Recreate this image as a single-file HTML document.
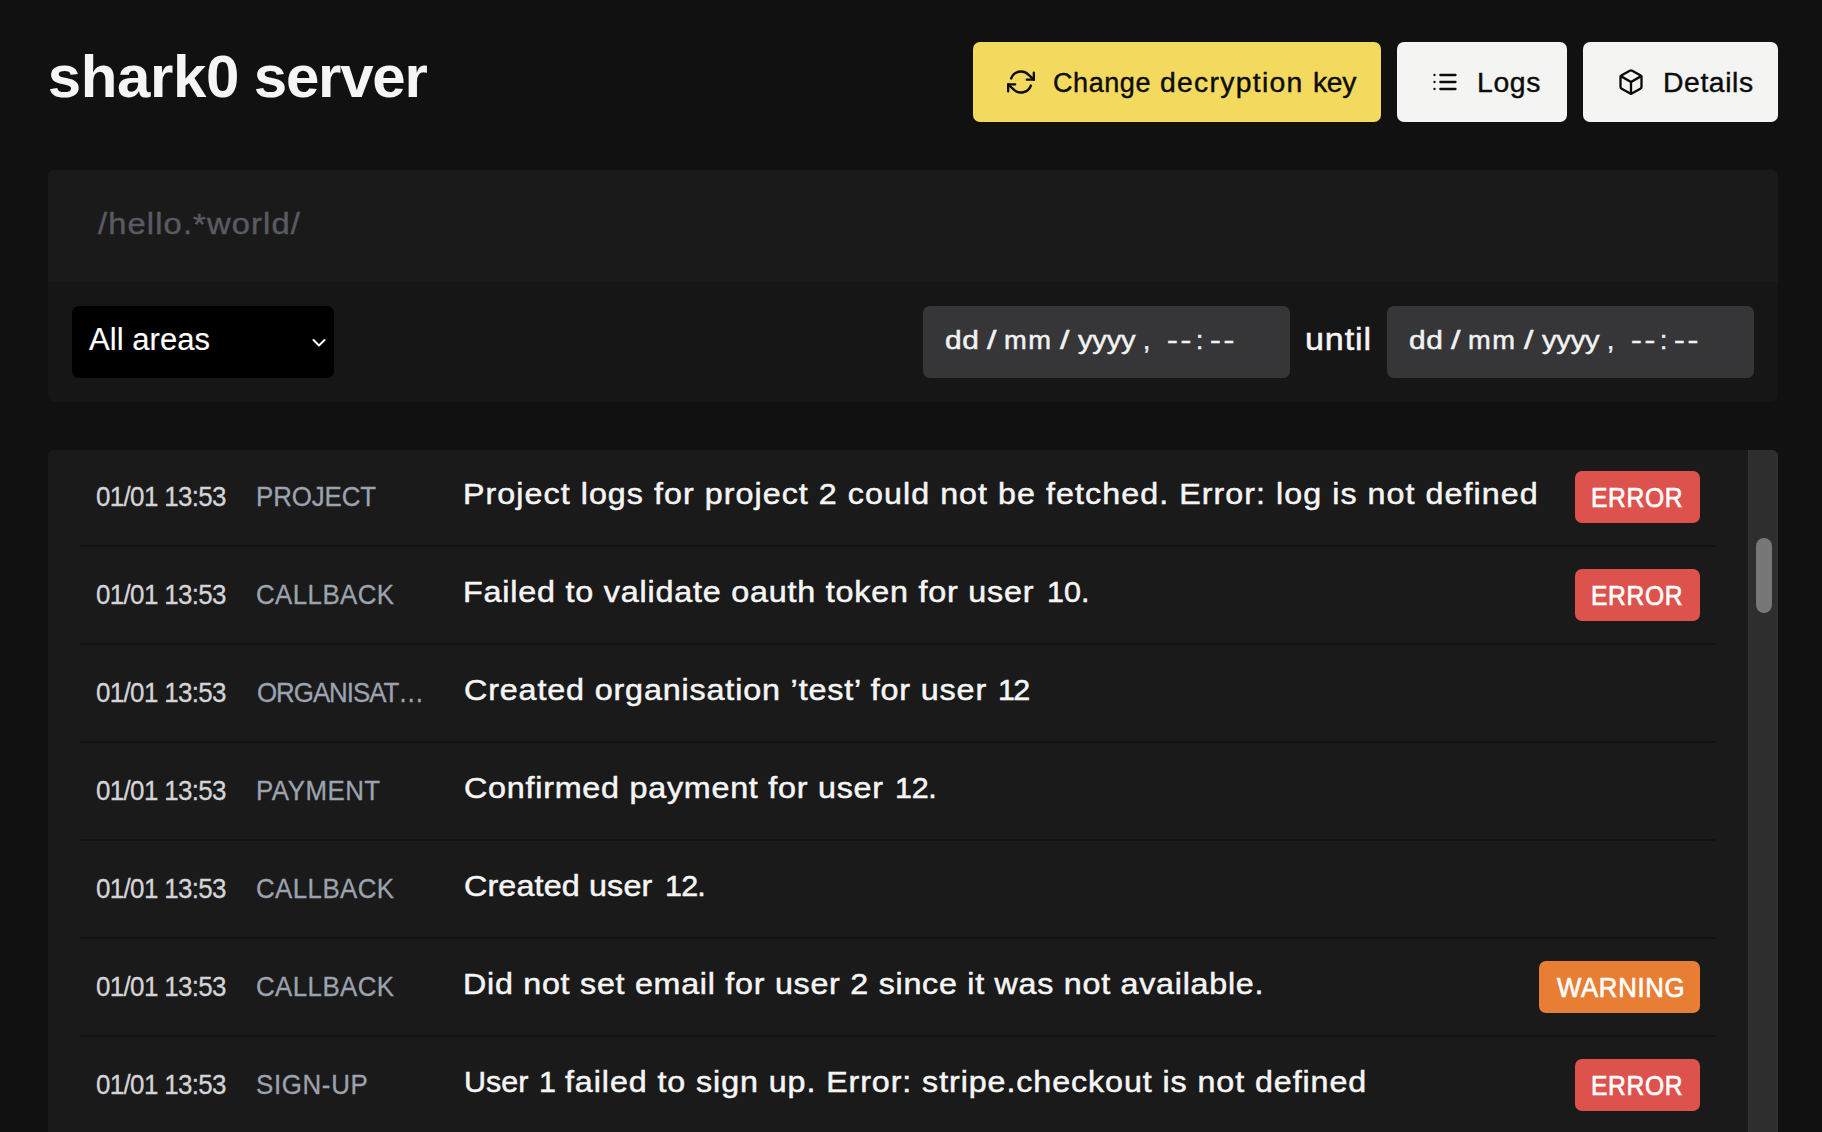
<!DOCTYPE html>
<html lang="en"><head><meta charset="utf-8"><title>shark0 server</title>
<style>
html,body{margin:0;padding:0;}
body{width:1822px;height:1132px;overflow:hidden;background:#111111;font-family:"Liberation Sans",sans-serif;position:relative;}
.t{position:absolute;white-space:nowrap;line-height:1;margin:0;padding:0;font-weight:400;}
.box{position:absolute;box-sizing:border-box;}
svg{position:absolute;overflow:visible;}
</style></head><body>
<div class="box" style="left:973px;top:42px;width:408px;height:80px;background:#f3da5e;border-radius:7px;"></div>
<div class="box" style="left:1397px;top:42px;width:170px;height:80px;background:#f4f4f3;border-radius:7px;"></div>
<div class="box" style="left:1583px;top:42px;width:195px;height:80px;background:#f4f4f3;border-radius:7px;"></div>
<div class="box" style="left:48px;top:170px;width:1730px;height:112px;background:#1a1a1a;border-radius:6px 6px 0 0;"></div>
<div class="box" style="left:48px;top:282px;width:1730px;height:120px;background:#161616;border-radius:0 0 6px 6px;"></div>
<div class="box" style="left:72px;top:306px;width:262px;height:72px;background:#000;border-radius:7px;"></div>
<div class="box" style="left:923px;top:306px;width:367px;height:72px;background:#363638;border-radius:7px;"></div>
<div class="box" style="left:1387px;top:306px;width:367px;height:72px;background:#363638;border-radius:7px;"></div>
<div class="box" style="left:48px;top:450px;width:1730px;height:700px;background:#1a1a1a;border-radius:6px 6px 0 0;overflow:hidden;"><div class="box" style="left:1700px;top:0;width:30px;height:700px;background:#2e2e2e;border-left:1px solid #333;border-right:1px solid #333;"></div><div class="box" style="left:1708px;top:88px;width:16px;height:75px;background:#777777;border-radius:8px;"></div></div>
<div class="box" style="left:80px;top:545px;width:1636px;height:2px;background:#131313;"></div>
<div class="box" style="left:80px;top:643px;width:1636px;height:2px;background:#131313;"></div>
<div class="box" style="left:80px;top:741px;width:1636px;height:2px;background:#131313;"></div>
<div class="box" style="left:80px;top:839px;width:1636px;height:2px;background:#131313;"></div>
<div class="box" style="left:80px;top:937px;width:1636px;height:2px;background:#131313;"></div>
<div class="box" style="left:80px;top:1035px;width:1636px;height:2px;background:#131313;"></div>
<div class="box" style="left:1575px;top:471px;width:125px;height:52px;background:#de524d;border-radius:7px;"></div>
<div class="box" style="left:1575px;top:569px;width:125px;height:52px;background:#de524d;border-radius:7px;"></div>
<div class="box" style="left:1539px;top:961px;width:161px;height:52px;background:#e87d34;border-radius:7px;"></div>
<div class="box" style="left:1575px;top:1059px;width:125px;height:52px;background:#de524d;border-radius:7px;"></div>
<svg style="left:1007.3px;top:67.7px;" width="28" height="28" viewBox="0 0 24 24" fill="none" stroke="#0c0c0c" stroke-width="2" stroke-linecap="round" stroke-linejoin="round"><polyline points="23 4 23 10 17 10"></polyline><polyline points="1 20 1 14 7 14"></polyline><path d="M3.51 9a9 9 0 0 1 14.85-3.36L23 10M1 14l4.64 4.36A9 9 0 0 0 20.49 15"></path></svg>
<svg style="left:1431.4px;top:68.2px;" width="28" height="28" viewBox="0 0 24 24" fill="none" stroke="#0c0c0c" stroke-width="2" stroke-linecap="round" stroke-linejoin="round"><line x1="8" y1="6" x2="21" y2="6"></line><line x1="8" y1="12" x2="21" y2="12"></line><line x1="8" y1="18" x2="21" y2="18"></line><line x1="3" y1="6" x2="3.01" y2="6"></line><line x1="3" y1="12" x2="3.01" y2="12"></line><line x1="3" y1="18" x2="3.01" y2="18"></line></svg>
<svg style="left:1617px;top:68px;" width="28" height="28" viewBox="0 0 24 24" fill="none" stroke="#0c0c0c" stroke-width="2" stroke-linecap="round" stroke-linejoin="round"><path d="M21 16V8a2 2 0 0 0-1-1.73l-7-4a2 2 0 0 0-2 0l-7 4A2 2 0 0 0 3 8v8a2 2 0 0 0 1 1.73l7 4a2 2 0 0 0 2 0l7-4A2 2 0 0 0 21 16z"></path><polyline points="3.27 6.96 12 12.01 20.73 6.96"></polyline><line x1="12" y1="22.08" x2="12" y2="12"></line></svg>
<svg style="left:311px;top:335px;" width="16" height="16" viewBox="0 0 16 16" fill="none" stroke="#ffffff" stroke-width="2" stroke-linecap="round" stroke-linejoin="round"><polyline points="2.5 5 8 10.5 13.5 5"></polyline></svg>
<h1 style="margin:0;padding:0;font-size:inherit;font-weight:inherit;"><span class="t" id="title" style="left:47.80px;top:47.01px;font-size:60px;color:#f5f5f5;letter-spacing:-0.385px;font-weight:700;">shark0</span>
<span class="t" id="title2" style="left:253.80px;top:47.01px;font-size:60px;color:#f5f5f5;letter-spacing:-1.240px;font-weight:700;">server</span>
</h1>
<span class="t" id="b1" style="left:1053.00px;top:70.24px;font-size:27px;color:#0c0c0c;letter-spacing:0.580px;-webkit-text-stroke:0.4px #0c0c0c;">Change</span>
<span class="t" id="b1b" style="left:1160.00px;top:70.24px;font-size:27px;color:#0c0c0c;letter-spacing:1.217px;transform:scaleX(1.05);transform-origin:0 0;-webkit-text-stroke:0.4px #0c0c0c;">decryption</span>
<span class="t" id="b1c" style="left:1313.00px;top:70.24px;font-size:27px;color:#0c0c0c;letter-spacing:-0.381px;transform:scaleX(1.05);transform-origin:0 0;-webkit-text-stroke:0.4px #0c0c0c;">key</span>
<span class="t" id="b2" style="left:1477.40px;top:70.24px;font-size:27px;color:#0c0c0c;letter-spacing:0.635px;transform:scaleX(1.05);transform-origin:0 0;-webkit-text-stroke:0.4px #0c0c0c;">Logs</span>
<span class="t" id="b3" style="left:1662.60px;top:70.24px;font-size:27px;color:#0c0c0c;letter-spacing:0.556px;transform:scaleX(1.05);transform-origin:0 0;-webkit-text-stroke:0.4px #0c0c0c;">Details</span>
<span class="t" id="ph" style="left:98.00px;top:208.96px;font-size:29.7px;color:#5a5a64;letter-spacing:1.036px;transform:scaleX(1.1);transform-origin:0 0;-webkit-text-stroke:0.4px #5a5a64;">/hello.*world/</span>
<span class="t" id="sel" style="left:89.00px;top:323.76px;font-size:31px;color:#ffffff;letter-spacing:0.062px;-webkit-text-stroke:0.15px #ffffff;">All areas</span>
<span class="t" id="until" style="left:1305.20px;top:324.36px;font-size:31px;color:#f5f5f5;letter-spacing:0.775px;transform:scaleX(1.1);transform-origin:0 0;-webkit-text-stroke:0.5px #f5f5f5;">until</span>
<span class="t" id="d1_0" style="left:945.00px;top:326.99px;font-size:26px;color:#f2f2f2;letter-spacing:0.522px;transform:scaleX(1.15);transform-origin:0 0;-webkit-text-stroke:0.5px #f2f2f2;">dd</span>
<span class="t" id="d1_1" style="left:987.00px;top:326.99px;font-size:26px;color:#f2f2f2;letter-spacing:0.000px;transform:scaleX(1.3);transform-origin:0 0;-webkit-text-stroke:0.5px #f2f2f2;">/</span>
<span class="t" id="d1_2" style="left:1004.00px;top:326.99px;font-size:26px;color:#f2f2f2;letter-spacing:1.333px;transform:scaleX(1.05);transform-origin:0 0;-webkit-text-stroke:0.5px #f2f2f2;">mm</span>
<span class="t" id="d1_3" style="left:1060.00px;top:326.99px;font-size:26px;color:#f2f2f2;letter-spacing:0.000px;transform:scaleX(1.3);transform-origin:0 0;-webkit-text-stroke:0.5px #f2f2f2;">/</span>
<span class="t" id="d1_4" style="left:1078.00px;top:326.99px;font-size:26px;color:#f2f2f2;letter-spacing:-0.179px;transform:scaleX(1.12);transform-origin:0 0;-webkit-text-stroke:0.5px #f2f2f2;">yyyy</span>
<span class="t" id="d1_5" style="left:1143.00px;top:326.99px;font-size:26px;color:#f2f2f2;letter-spacing:0.000px;-webkit-text-stroke:0.5px #f2f2f2;">,</span>
<span class="t" id="d1_6" style="left:1166.70px;top:326.99px;font-size:26px;color:#f2f2f2;letter-spacing:2.080px;transform:scaleX(1.25);transform-origin:0 0;-webkit-text-stroke:0.5px #f2f2f2;">--</span>
<span class="t" id="d1_7" style="left:1196.00px;top:326.99px;font-size:26px;color:#f2f2f2;letter-spacing:0.000px;-webkit-text-stroke:0.5px #f2f2f2;">:</span>
<span class="t" id="d1_8" style="left:1210.20px;top:326.99px;font-size:26px;color:#f2f2f2;letter-spacing:2.140px;transform:scaleX(1.25);transform-origin:0 0;-webkit-text-stroke:0.5px #f2f2f2;">--</span>
<span class="t" id="d2_0" style="left:1409.00px;top:326.99px;font-size:26px;color:#f2f2f2;letter-spacing:0.522px;transform:scaleX(1.15);transform-origin:0 0;-webkit-text-stroke:0.5px #f2f2f2;">dd</span>
<span class="t" id="d2_1" style="left:1451.00px;top:326.99px;font-size:26px;color:#f2f2f2;letter-spacing:0.000px;transform:scaleX(1.3);transform-origin:0 0;-webkit-text-stroke:0.5px #f2f2f2;">/</span>
<span class="t" id="d2_2" style="left:1468.00px;top:326.99px;font-size:26px;color:#f2f2f2;letter-spacing:1.333px;transform:scaleX(1.05);transform-origin:0 0;-webkit-text-stroke:0.5px #f2f2f2;">mm</span>
<span class="t" id="d2_3" style="left:1524.00px;top:326.99px;font-size:26px;color:#f2f2f2;letter-spacing:0.000px;transform:scaleX(1.3);transform-origin:0 0;-webkit-text-stroke:0.5px #f2f2f2;">/</span>
<span class="t" id="d2_4" style="left:1542.00px;top:326.99px;font-size:26px;color:#f2f2f2;letter-spacing:-0.179px;transform:scaleX(1.12);transform-origin:0 0;-webkit-text-stroke:0.5px #f2f2f2;">yyyy</span>
<span class="t" id="d2_5" style="left:1607.00px;top:326.99px;font-size:26px;color:#f2f2f2;letter-spacing:0.000px;-webkit-text-stroke:0.5px #f2f2f2;">,</span>
<span class="t" id="d2_6" style="left:1630.70px;top:326.99px;font-size:26px;color:#f2f2f2;letter-spacing:2.080px;transform:scaleX(1.25);transform-origin:0 0;-webkit-text-stroke:0.5px #f2f2f2;">--</span>
<span class="t" id="d2_7" style="left:1660.00px;top:326.99px;font-size:26px;color:#f2f2f2;letter-spacing:0.000px;-webkit-text-stroke:0.5px #f2f2f2;">:</span>
<span class="t" id="d2_8" style="left:1674.20px;top:326.99px;font-size:26px;color:#f2f2f2;letter-spacing:2.140px;transform:scaleX(1.25);transform-origin:0 0;-webkit-text-stroke:0.5px #f2f2f2;">--</span>
<span class="t" id="t0" style="left:96.20px;top:483.04px;font-size:27.6px;color:#d4d4d8;letter-spacing:-0.691px;transform:scaleX(0.94);transform-origin:0 0;-webkit-text-stroke:0.3px #d4d4d8;">01/01 13:53</span>
<span class="t" id="a0" style="left:255.60px;top:483.12px;font-size:27.5px;color:#9ca3af;letter-spacing:-0.089px;transform:scaleX(0.94);transform-origin:0 0;-webkit-text-stroke:0.3px #9ca3af;">PROJECT</span>
<span class="t" id="m0" style="left:463.20px;top:479.40px;font-size:29.3px;color:#f5f5f5;letter-spacing:0.956px;transform:scaleX(1.1);transform-origin:0 0;-webkit-text-stroke:0.5px #f5f5f5;">Project logs for project 2 could not be fetched. Error: log is not defined</span>
<span class="t" id="bd0" style="left:1590.80px;top:484.20px;font-size:28px;color:#ffffff;letter-spacing:0.710px;transform:scaleX(0.88);transform-origin:0 0;-webkit-text-stroke:0.7px #ffffff;">ERROR</span>
<span class="t" id="t1" style="left:96.20px;top:581.04px;font-size:27.6px;color:#d4d4d8;letter-spacing:-0.691px;transform:scaleX(0.94);transform-origin:0 0;-webkit-text-stroke:0.3px #d4d4d8;">01/01 13:53</span>
<span class="t" id="a1" style="left:255.60px;top:581.12px;font-size:27.5px;color:#9ca3af;letter-spacing:0.456px;transform:scaleX(0.94);transform-origin:0 0;-webkit-text-stroke:0.3px #9ca3af;">CALLBACK</span>
<span class="t" id="m1_0" style="left:463.20px;top:577.40px;font-size:29.3px;color:#f5f5f5;letter-spacing:0.720px;transform:scaleX(1.1024);transform-origin:0 0;-webkit-text-stroke:0.5px #f5f5f5;">Failed to validate oauth token for user</span>
<span class="t" id="m1_1" style="left:1047.20px;top:577.40px;font-size:29.3px;color:#f5f5f5;letter-spacing:0.000px;transform:scaleX(1.04);transform-origin:0 0;-webkit-text-stroke:0.5px #f5f5f5;">10.</span>
<span class="t" id="bd1" style="left:1590.80px;top:582.20px;font-size:28px;color:#ffffff;letter-spacing:0.710px;transform:scaleX(0.88);transform-origin:0 0;-webkit-text-stroke:0.7px #ffffff;">ERROR</span>
<span class="t" id="t2" style="left:96.20px;top:679.04px;font-size:27.6px;color:#d4d4d8;letter-spacing:-0.691px;transform:scaleX(0.94);transform-origin:0 0;-webkit-text-stroke:0.3px #d4d4d8;">01/01 13:53</span>
<span class="t" id="a2" style="left:256.60px;top:679.12px;font-size:27.5px;color:#9ca3af;letter-spacing:-1.064px;transform:scaleX(0.94);transform-origin:0 0;-webkit-text-stroke:0.3px #9ca3af;">ORGANISAT…</span>
<span class="t" id="m2_0" style="left:464.20px;top:675.40px;font-size:29.3px;color:#f5f5f5;letter-spacing:0.769px;transform:scaleX(1.1024);transform-origin:0 0;-webkit-text-stroke:0.5px #f5f5f5;">Created organisation ’test’ for user</span>
<span class="t" id="m2_1" style="left:998.40px;top:675.40px;font-size:29.3px;color:#f5f5f5;letter-spacing:-1.519px;transform:scaleX(1.04);transform-origin:0 0;-webkit-text-stroke:0.5px #f5f5f5;">12</span>
<span class="t" id="t3" style="left:96.20px;top:777.04px;font-size:27.6px;color:#d4d4d8;letter-spacing:-0.691px;transform:scaleX(0.94);transform-origin:0 0;-webkit-text-stroke:0.3px #d4d4d8;">01/01 13:53</span>
<span class="t" id="a3" style="left:255.60px;top:777.12px;font-size:27.5px;color:#9ca3af;letter-spacing:0.532px;transform:scaleX(0.94);transform-origin:0 0;-webkit-text-stroke:0.3px #9ca3af;">PAYMENT</span>
<span class="t" id="m3_0" style="left:464.20px;top:773.40px;font-size:29.3px;color:#f5f5f5;letter-spacing:0.681px;transform:scaleX(1.1024);transform-origin:0 0;-webkit-text-stroke:0.5px #f5f5f5;">Confirmed payment for user</span>
<span class="t" id="m3_1" style="left:895.00px;top:773.40px;font-size:29.3px;color:#f5f5f5;letter-spacing:-0.260px;transform:scaleX(1.04);transform-origin:0 0;-webkit-text-stroke:0.5px #f5f5f5;">12.</span>
<span class="t" id="t4" style="left:96.20px;top:875.04px;font-size:27.6px;color:#d4d4d8;letter-spacing:-0.691px;transform:scaleX(0.94);transform-origin:0 0;-webkit-text-stroke:0.3px #d4d4d8;">01/01 13:53</span>
<span class="t" id="a4" style="left:255.60px;top:875.12px;font-size:27.5px;color:#9ca3af;letter-spacing:0.456px;transform:scaleX(0.94);transform-origin:0 0;-webkit-text-stroke:0.3px #9ca3af;">CALLBACK</span>
<span class="t" id="m4_0" style="left:464.20px;top:871.40px;font-size:29.3px;color:#f5f5f5;letter-spacing:0.127px;transform:scaleX(1.1024);transform-origin:0 0;-webkit-text-stroke:0.5px #f5f5f5;">Created user</span>
<span class="t" id="m4_1" style="left:664.80px;top:871.40px;font-size:29.3px;color:#f5f5f5;letter-spacing:-0.760px;transform:scaleX(1.04);transform-origin:0 0;-webkit-text-stroke:0.5px #f5f5f5;">12.</span>
<span class="t" id="t5" style="left:96.20px;top:973.04px;font-size:27.6px;color:#d4d4d8;letter-spacing:-0.691px;transform:scaleX(0.94);transform-origin:0 0;-webkit-text-stroke:0.3px #d4d4d8;">01/01 13:53</span>
<span class="t" id="a5" style="left:255.60px;top:973.12px;font-size:27.5px;color:#9ca3af;letter-spacing:0.456px;transform:scaleX(0.94);transform-origin:0 0;-webkit-text-stroke:0.3px #9ca3af;">CALLBACK</span>
<span class="t" id="m5" style="left:463.20px;top:969.40px;font-size:29.3px;color:#f5f5f5;letter-spacing:0.677px;transform:scaleX(1.1);transform-origin:0 0;-webkit-text-stroke:0.5px #f5f5f5;">Did not set email for user 2 since it was not available.</span>
<span class="t" id="bd5" style="left:1557.00px;top:974.20px;font-size:28px;color:#ffffff;letter-spacing:0.725px;transform:scaleX(0.92);transform-origin:0 0;-webkit-text-stroke:0.7px #ffffff;">WARNING</span>
<span class="t" id="t6" style="left:96.20px;top:1071.04px;font-size:27.6px;color:#d4d4d8;letter-spacing:-0.691px;transform:scaleX(0.94);transform-origin:0 0;-webkit-text-stroke:0.3px #d4d4d8;">01/01 13:53</span>
<span class="t" id="a6" style="left:255.60px;top:1071.12px;font-size:27.5px;color:#9ca3af;letter-spacing:0.709px;transform:scaleX(0.94);transform-origin:0 0;-webkit-text-stroke:0.3px #9ca3af;">SIGN-UP</span>
<span class="t" id="m6a" style="left:464.30px;top:1067.40px;font-size:29.3px;color:#f5f5f5;letter-spacing:-0.006px;transform:scaleX(1.04);transform-origin:0 0;-webkit-text-stroke:0.5px #f5f5f5;">User</span>
<span class="t" id="m6c" style="left:539.00px;top:1067.40px;font-size:29.3px;color:#f5f5f5;letter-spacing:0.000px;transform:scaleX(1.04);transform-origin:0 0;-webkit-text-stroke:0.5px #f5f5f5;">1</span>
<span class="t" id="m6b" style="left:564.50px;top:1067.40px;font-size:29.3px;color:#f5f5f5;letter-spacing:0.837px;transform:scaleX(1.1);transform-origin:0 0;-webkit-text-stroke:0.5px #f5f5f5;">failed to sign up. Error: stripe.checkout is not defined</span>
<span class="t" id="bd6" style="left:1590.80px;top:1072.20px;font-size:28px;color:#ffffff;letter-spacing:0.710px;transform:scaleX(0.88);transform-origin:0 0;-webkit-text-stroke:0.7px #ffffff;">ERROR</span>
</body></html>
